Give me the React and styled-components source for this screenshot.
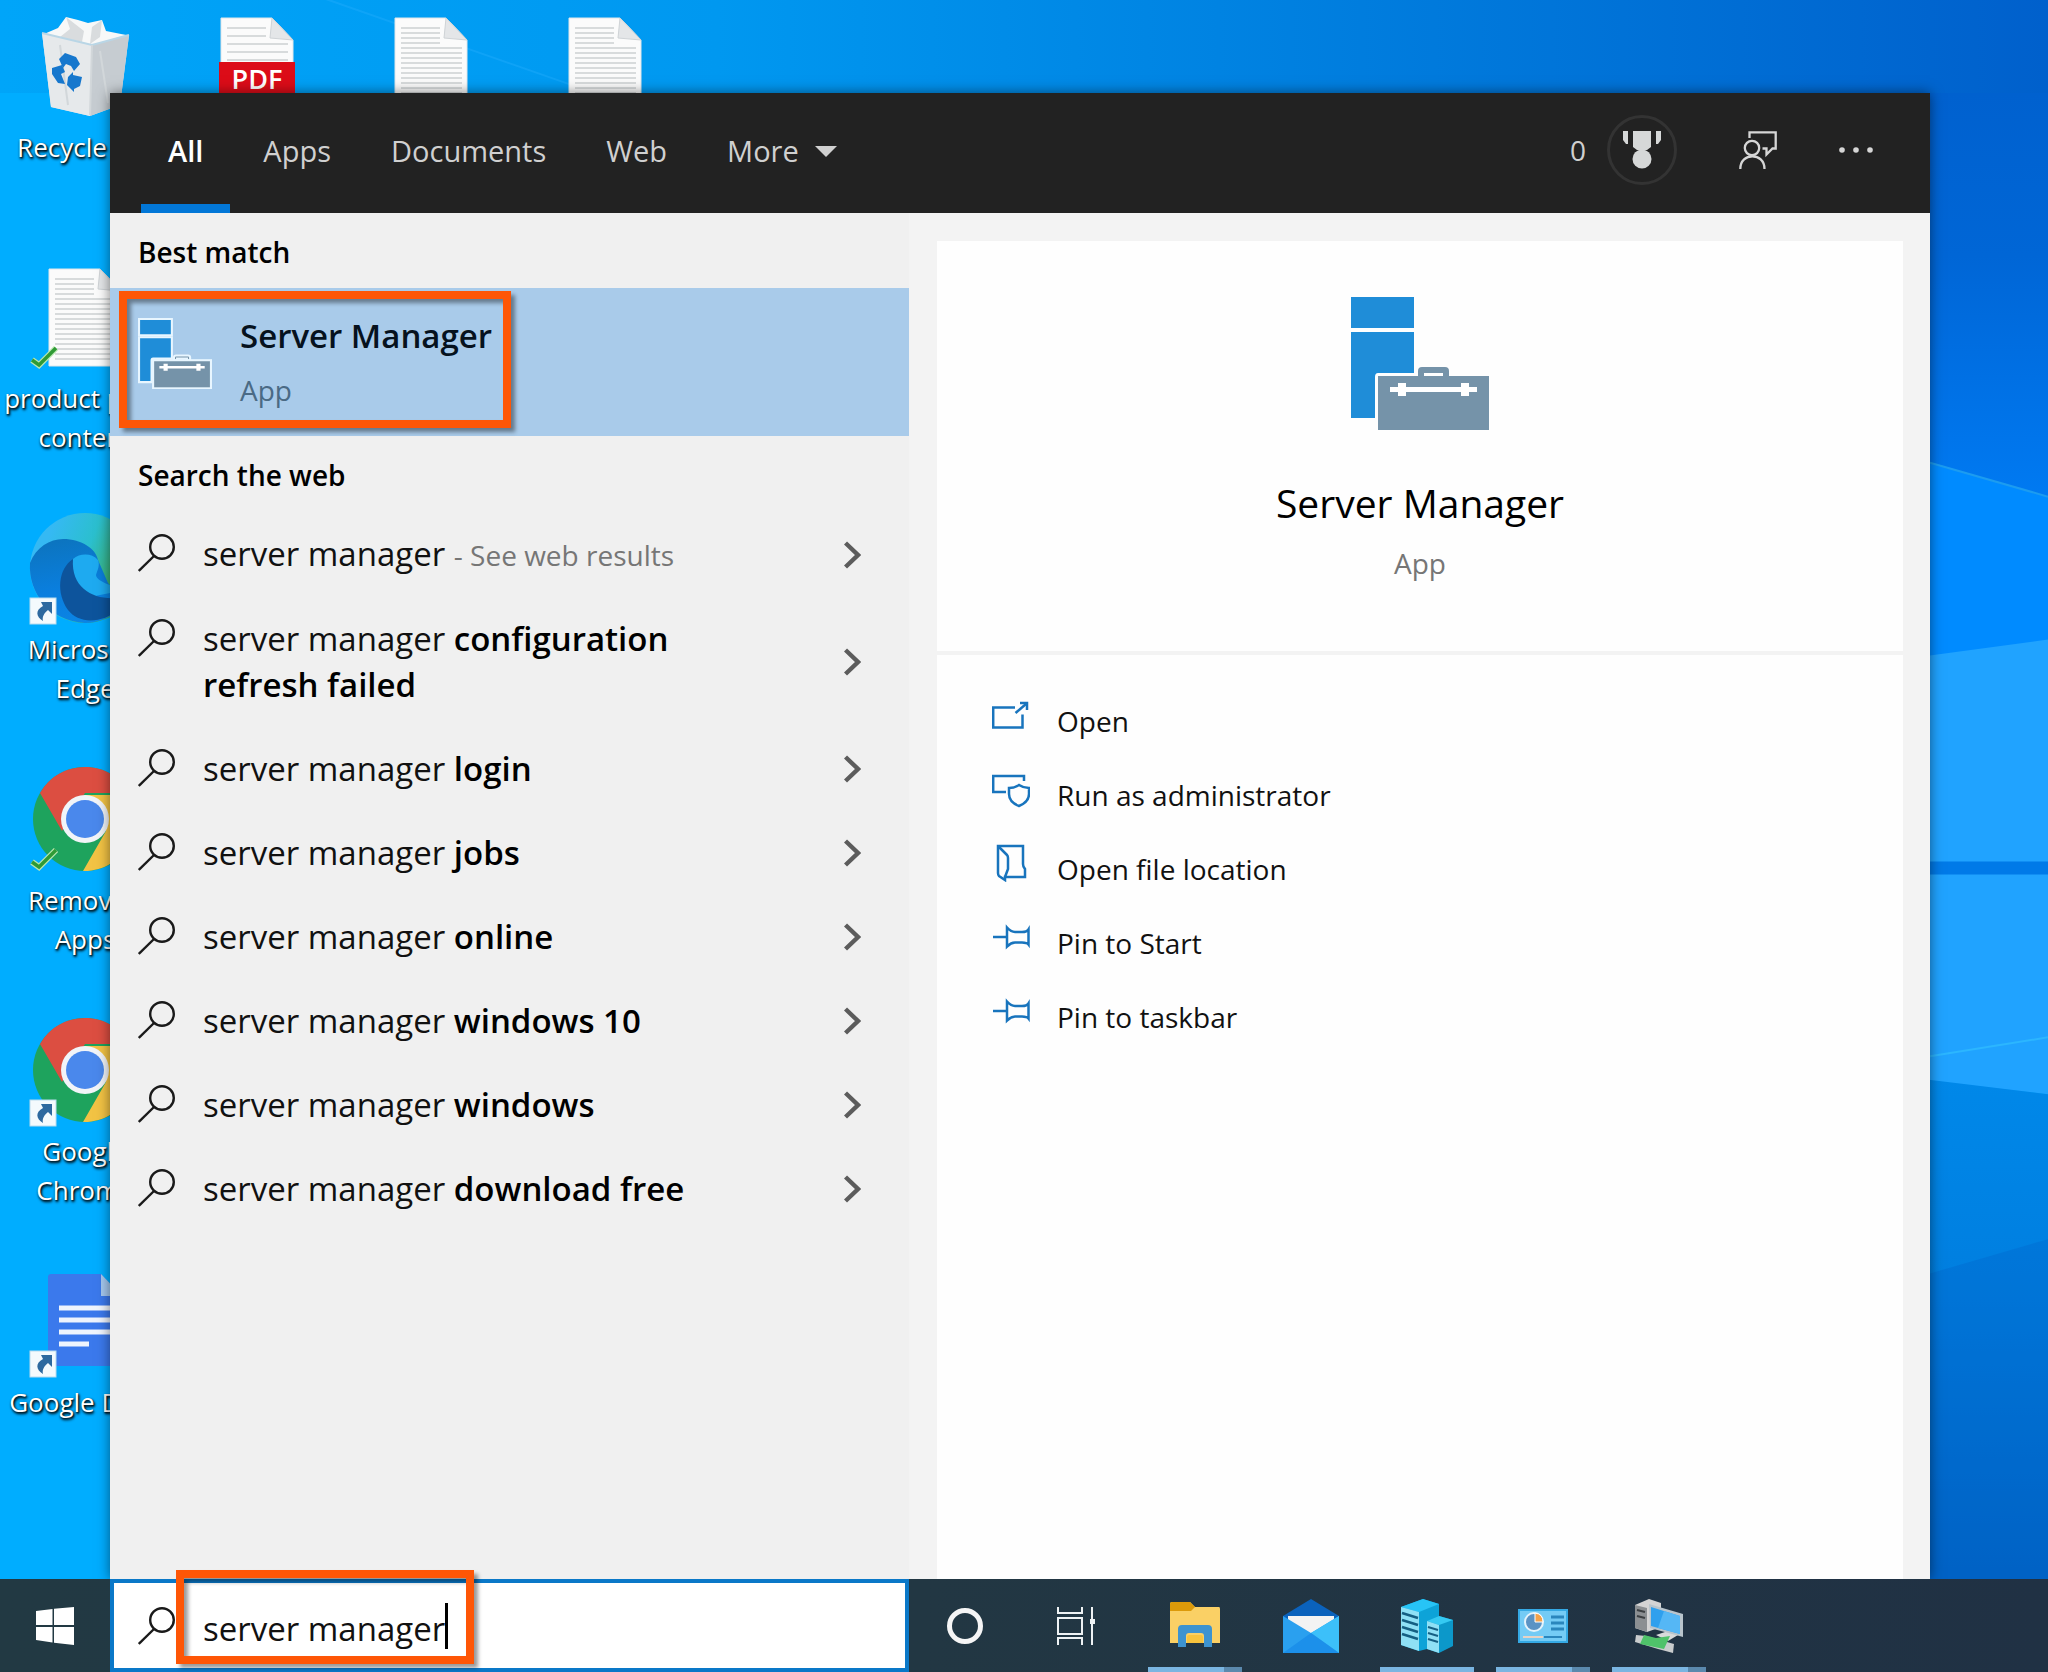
import React, { useState } from 'react';
import styled, { createGlobalStyle, css } from 'styled-components';

const GlobalStyle = createGlobalStyle`
  *, *::before, *::after { box-sizing: border-box; }
  body {
    margin: 0;
    font-family: 'Open Sans', 'Noto Sans', sans-serif;
    font-size: 28px;
    line-height: 38px;
    color: #111;
  }
  button, input { font: inherit; color: inherit; }
  svg { display: block; flex: none; }
`;

const buttonReset = css`
  border: 0;
  margin: 0;
  padding: 0;
  background: none;
  text-align: left;
  cursor: pointer;
`;

/* ---------- shell ---------- */

const Shell = styled.div`
  min-height: 100vh;
  display: flex;
  flex-direction: column;
`;

const Desktop = styled.main`
  position: relative;
  flex: 1;
  overflow: hidden;
  background: #00adff;
`;

const WallpaperArt = styled.svg`
  position: absolute;
  inset: 0;
  width: 100%;
  height: 100%;
`;

const IconGrid = styled.div`
  position: relative;
  display: grid;
  grid-auto-flow: column;
  grid-template-rows: repeat(6, 251px);
  grid-template-columns: 170px repeat(3, 174px);
  height: 0;
`;

const Shortcut = styled.button`
  ${buttonReset}
  grid-column: ${(p) => p.$column};
  display: flex;
  flex-direction: column;
  align-items: center;
  gap: 7px;
  padding-top: 11px;
`;

const ShortcutLabel = styled.span`
  width: 170px;
  font-size: 26px;
  line-height: 39px;
  text-align: center;
  color: #fff;
  text-shadow: 1px 2px 3px #000, 1px 1px 2px rgba(0, 0, 0, 0.8);
`;

/* ---------- search window ---------- */

const SearchWindow = styled.section`
  position: absolute;
  top: 93px;
  left: 110px;
  right: 118px;
  bottom: 0;
  display: flex;
  flex-direction: column;
  box-shadow: 0 0 12px rgba(0, 0, 0, 0.5);
`;

const Header = styled.header`
  flex: none;
  height: 120px;
  display: flex;
  align-items: center;
  padding: 0 57px 0 31px;
  background: #222;
  color: #d0d0d0;
`;

const Tabs = styled.nav`
  align-self: stretch;
  display: flex;
  gap: 6px;
`;

const Tab = styled.button`
  ${buttonReset}
  display: flex;
  align-items: center;
  gap: 16px;
  padding: 9px 27px 4px;
  border-bottom: 9px solid ${(p) => (p.$active ? '#0277d7' : 'transparent')};
  color: ${(p) => (p.$active ? '#fff' : '#d0d0d0')};
  font-size: 29px;
  font-weight: ${(p) => (p.$active ? 600 : 400)};
`;

const HeaderTools = styled.div`
  margin-left: auto;
  display: flex;
  align-items: center;
  gap: 62px;
  padding-bottom: 7px;
`;

const Rewards = styled.button`
  ${buttonReset}
  display: flex;
  align-items: center;
  gap: 21px;
`;

const RewardsRing = styled.span`
  display: grid;
  place-items: center;
  width: 70px;
  height: 70px;
  border: 3px solid #333;
  border-radius: 50%;
`;

const ToolButton = styled.button`
  ${buttonReset}
`;

const Panes = styled.div`
  flex: 1;
  display: flex;
  min-height: 0;
`;

const Results = styled.div`
  flex: none;
  width: 799px;
  background: #f0f0f0;
`;

const SectionTitle = styled.h2`
  margin: 0;
  height: 75px;
  padding: 20px 28px 0;
  font-size: 28px;
  line-height: 38px;
  font-weight: 600;
  color: #000;
`;

const BestMatch = styled.button`
  ${buttonReset}
  position: relative;
  width: 100%;
  height: 148px;
  display: flex;
  align-items: flex-start;
  gap: 28px;
  padding: 25px 28px;
  background: #a9cbea;
`;

const BestIcon = styled.span`
  margin-top: 5px;
`;

const BestText = styled.span`
  display: flex;
  flex-direction: column;
  gap: 12px;
`;

const BestName = styled.span`
  font-size: 33px;
  line-height: 46px;
  font-weight: 600;
  color: #06121e;
`;

const BestKind = styled.span`
  color: #4a6a85;
`;

const Highlight = styled.span`
  position: absolute;
  border: 8px solid #fe5606;
  box-shadow: 4px 4px 4px rgba(0, 0, 0, 0.4), inset 4px 4px 4px rgba(0, 0, 0, 0.4);
  pointer-events: none;
`;

const MatchHighlight = styled(Highlight)`
  left: 9px;
  top: 3px;
  width: 392px;
  height: 137px;
`;

const FieldHighlight = styled(Highlight)`
  left: 62px;
  top: -13px;
  width: 298px;
  height: 94px;
`;

const ResultList = styled.ul`
  margin: 0;
  padding: 0;
  list-style: none;
`;

const Result = styled.button`
  ${buttonReset}
  width: 100%;
  display: flex;
  align-items: center;
  gap: 28px;
  padding: 20px 48px 18px 28px;
`;

const ResultIcon = styled.span`
  align-self: flex-start;
  padding-top: 3px;
`;

const ResultText = styled.span`
  flex: 1;
  padding-right: 120px;
  font-size: 33px;
  line-height: 46px;
`;

const Completion = styled.strong`
  font-weight: 600;
  color: #000;
`;

const Hint = styled.span`
  font-size: 28px;
  color: #767676;
`;

const Details = styled.div`
  flex: 1;
  display: flex;
  padding: 28px 27px 0 28px;
  background: #f3f3f3;
`;

const Card = styled.article`
  flex: 1;
  background: #fefefe;
`;

const Preview = styled.div`
  display: flex;
  flex-direction: column;
  align-items: center;
  padding: 54px 0 69px;
  border-bottom: 4px solid #f3f3f3;
`;

const PreviewName = styled.h1`
  margin: 41px 0 11px;
  font-size: 39px;
  line-height: 60px;
  font-weight: 400;
  color: #000;
`;

const PreviewKind = styled.p`
  margin: 0;
  color: #767676;
`;

const ActionList = styled.ul`
  margin: 0;
  padding: 41px 55px;
  list-style: none;
`;

const Action = styled.button`
  ${buttonReset}
  width: 100%;
  height: 74px;
  display: flex;
  align-items: flex-start;
  gap: 27px;
`;

const ActionLabel = styled.span`
  line-height: 50px;
`;

/* ---------- taskbar ---------- */

const Taskbar = styled.footer`
  flex: none;
  position: relative;
  height: 93px;
  display: flex;
  background: linear-gradient(90deg, #223943, #223743 45%, #203144);
`;

const TaskButton = styled.button`
  ${buttonReset}
  display: grid;
  place-items: center;
  width: ${(p) => (p.$wide ? 111 : 94)}px;
`;

const StartButton = styled(TaskButton)`
  width: 110px;
`;

const RunningApps = styled.div`
  display: flex;
  gap: 22px;
  margin-left: 17px;
`;

const AppButton = styled(TaskButton)`
  padding-top: 5px;
  border-bottom: 5px solid transparent;
  ${(p) => p.$running && css`border-image: linear-gradient(90deg, #7ab5e1 ${p.$stacked ? 73 : 100}px, #5b89ad 0) 5;`}
`;

const SearchField = styled.label`
  position: relative;
  width: 799px;
  display: flex;
  align-items: center;
  gap: 28px;
  padding-left: 24px;
  border: 4px solid #0a78c8;
  background: #fff;
`;

const SearchInput = styled.input`
  field-sizing: content;
  padding: 6px 0 0;
  border: 0;
  outline: 0;
  background: none;
  font-size: 33px;
  line-height: 46px;
  caret-color: transparent;
`;

const Caret = styled.span`
  width: 3px;
  height: 46px;
  margin-left: -28px;
  background: #000;
`;

/* ---------- drawings ---------- */

function Wallpaper() {
  return (
    <WallpaperArt viewBox="0 0 2048 1580" preserveAspectRatio="none" aria-hidden="true">
      <defs>
        <linearGradient id="sky" x1="0" x2="1" y1="0" y2="0">
          <stop offset="0" stopColor="#00a5f9" />
          <stop offset="0.35" stopColor="#0098f0" />
          <stop offset="0.7" stopColor="#007adc" />
          <stop offset="1" stopColor="#0060cc" />
        </linearGradient>
        <linearGradient id="rightSky" x1="0" x2="0" y1="0" y2="1">
          <stop offset="0" stopColor="#0061cf" />
          <stop offset="0.4" stopColor="#0066d6" />
          <stop offset="1" stopColor="#007af2" />
        </linearGradient>
        <linearGradient id="ground" x1="0" x2="0" y1="0" y2="1">
          <stop offset="0" stopColor="#0088e9" />
          <stop offset="0.4" stopColor="#007fe0" />
          <stop offset="1" stopColor="#0063c4" />
        </linearGradient>
      </defs>
      <rect width="2048" height="120" fill="url(#sky)" />
      <rect y="93" width="130" height="1487" fill="#00adff" />
      <path d="M300 -10L700 130" stroke="#2ab0ff" strokeWidth="2" opacity="0.35" />
      <path d="M1900 93H2048V500H1900Z" fill="url(#rightSky)" />
      <path d="M1900 455L2048 497V660H1900Z" fill="#008bff" />
      <path d="M1930 463L2048 497" stroke="#1c9cf0" strokeWidth="2" />
      <path d="M1900 660L2048 640V1095L1900 1078Z" fill="#20a3ff" />
      <path d="M1900 862H2048V875H1900Z" fill="#007ae8" />
      <path d="M1930 1057L2048 1038" stroke="#2cb6ff" strokeWidth="2" />
      <path d="M1900 1077L2048 1095V1580H1900Z" fill="url(#ground)" />
      <path d="M1900 1283L2048 1240V1580H1900Z" fill="#0060c8" opacity="0.3" />
    </WallpaperArt>
  );
}

const LinkBadge = () => (
  <g>
    <rect x="0" y="85" width="26" height="26" fill="#f4fafd" stroke="#b9dcee" />
    <path d="M11 89H22V101L18 97C14 100 12 104 13 108C6 104 5 97 13 93Z" fill="#2d699f" />
  </g>
);

const Sync = () => (
  <g fill="none">
    <path d="M2 98L9 103L26 86" stroke="#b8e8b0" strokeWidth="6" />
    <path d="M2 98L9 103L26 86" stroke="#2f9a35" strokeWidth="3.5" />
  </g>
);

function DesktopArt({ children }) {
  return (
    <svg width="110" height="110" viewBox="0 0 110 110" overflow="visible" aria-hidden="true">
      {children}
    </svg>
  );
}

function BinArt() {
  return (
    <DesktopArt>
      <path d="M12 22L99 24L90 94L60 105L21 96Z" fill="#dfe3e6" />
      <path d="M12 22L62 34L60 105L21 96Z" fill="#e6e9eb" />
      <path d="M62 34L99 24L90 94L60 105Z" fill="#c6ccd1" />
      <path d="M14 23L28 17L36 6L48 9L58 12L72 9L76 20L96 24L62 34Z" fill="#f7f8f8" />
      <path d="M36 6L40 18L30 26L52 31L54 20ZM62 16L72 9L70 26L60 33Z" fill="#d9dcde" />
      <path d="M12 22L62 34L99 24" fill="none" stroke="#b9d6e6" strokeWidth="2" />
      <path d="M62 34L60 104M70 40L78 92M30 34L38 94" stroke="#d2d7da" strokeWidth="2" />
      <g fill="#1677cd">
        <path d="M29 48L35 42L46 46L50 53L44 60L41 55L36 53L33 57Z" />
        <path d="M22 57L32 54L35 61L31 63L35 73L28 72L22 63Z" />
        <path d="M38 66L43 61V64L52 66L50 75L44 78V81L37 74Z" />
      </g>
    </DesktopArt>
  );
}

function Page({ sparse }) {
  const lines = [];
  for (let y = 17; y < 98; y += sparse ? 8 : 5) lines.push(y);
  return (
    <g>
      <path d="M19 7H70L91 29V104H19Z" fill="#fbfbfb" stroke="#dfe6ea" />
      {lines.map((y) => (
        <path key={y} d={`M25 ${y}H${y < 33 ? 64 : 86}`} stroke="#cdd0d2" strokeWidth="1.5" />
      ))}
      <path d="M70 7L68 27L91 29Z" fill="#e4e6e8" stroke="#cfd3d6" />
    </g>
  );
}

const PageArt = () => (
  <DesktopArt>
    <Page />
  </DesktopArt>
);

const SyncedPageArt = () => (
  <DesktopArt>
    <Page />
    <Sync />
  </DesktopArt>
);

const PdfArt = () => (
  <DesktopArt>
    <Page sparse />
    <rect x="17" y="51" width="76" height="46" fill="#dc0c18" />
    <text x="55" y="78" textAnchor="middle" fontSize="27" fontWeight="600" fill="#fff">
      PDF
    </text>
  </DesktopArt>
);

function EdgeArt() {
  return (
    <DesktopArt>
      <defs>
        <linearGradient id="edgeTop" x1="0" x2="1" y1="0.2" y2="0.6">
          <stop offset="0.15" stopColor="#35b9f3" />
          <stop offset="0.5" stopColor="#2bbfce" />
          <stop offset="0.85" stopColor="#3fae5b" />
        </linearGradient>
        <linearGradient id="edgeMid" x1="0.3" x2="0.5" y1="0" y2="1">
          <stop offset="0" stopColor="#0c74bf" />
          <stop offset="0.6" stopColor="#0a7fdf" />
          <stop offset="1" stopColor="#0b84e4" />
        </linearGradient>
      </defs>
      <circle cx="55" cy="55" r="55" fill="url(#edgeTop)" />
      <path d="M0 50C6 34 20 26 33 26C52 26 66 36 68 47L78 70L96 90C82 104 70 110 55 110C20 108 -2 80 0 50Z" fill="url(#edgeMid)" />
      <path d="M43 46C36 60 42 78 60 84L80 80V72C74 70 66 66 66 62C68 56 70 52 68 47C62 40 50 40 43 46Z" fill="#1eaaf0" />
      <path d="M43 46C28 56 26 80 38 97C48 110 70 112 90 96L104 80C80 92 40 84 43 46Z" fill="#0d549c" />
      <LinkBadge />
    </DesktopArt>
  );
}

function ChromeArt({ badge }) {
  return (
    <DesktopArt>
      <circle cx="55" cy="55" r="52" fill="#1ea35d" />
      <path d="M10 29C20 12 36 3 55 3C74 3 91 13 100 29H55L32 67Z" fill="#dc4e41" />
      <path d="M55 31H101C115 62 95 108 53 107L76 67Z" fill="#f2c344" />
      <circle cx="55" cy="55" r="24" fill="#f1f4f8" />
      <circle cx="55" cy="55" r="19" fill="#4a88ec" />
      {badge}
    </DesktopArt>
  );
}

const DocsArt = () => (
  <DesktopArt>
    <path d="M18 11Q18 8 21 8H71L92 30V97Q92 100 89 100H21Q18 100 18 97Z" fill="#3b79ec" />
    <path d="M71 8L92 30H71Z" fill="#a5c8ee" />
    <path d="M29 42H82M29 54H82M29 66H82M29 78H59" stroke="#eef4fd" strokeWidth="5" />
    <LinkBadge />
  </DesktopArt>
);

const Magnifier = () => (
  <svg width="37" height="38" viewBox="0 0 37 38" fill="none" stroke="#1a1a1a" strokeWidth="2.4" aria-hidden="true">
    <circle cx="24" cy="13" r="11.8" />
    <path d="M0.8 37L16 22" />
  </svg>
);

const Chevron = () => (
  <svg width="17" height="28" viewBox="0 0 17 28" fill="none" stroke="#5c5c5c" strokeWidth="4.4" aria-hidden="true">
    <path d="M1.5 2L14 14L1.5 26" />
  </svg>
);

const ServerArt = ({ width, outlined }) => (
  <svg
    width={width}
    viewBox="-2 -2 142 137"
    stroke={outlined ? '#e8f6ff' : 'none'}
    strokeWidth={outlined ? 4 : 0}
    aria-hidden="true"
  >
    <path d="M0 0H63V31H0Z" fill="#1f8dd8" />
    <path d="M0 35H63V76H27Q24 76 24 80V121H0Z" fill="#1f8dd8" />
    <path d="M67 79V74Q67 70 71 70H94Q98 70 98 74V79H92V76H73V79Z" fill="#7593a9" />
    <rect x="27" y="79" width="111" height="54" fill="#7593a9" />
    <path d="M39 92.500H126" stroke="#fff" strokeWidth="5" />
    <path d="M47 86H55V99H47ZM110 86H118V99H110Z" fill="#fff" stroke="none" />
  </svg>
);

const Medal = () => (
  <svg width="38" height="38" viewBox="0 0 38 38" fill="#d6d8d8" aria-hidden="true">
    <path d="M10 0H28V16L24 19H14L10 16ZM0 0H5V13H3L0 9ZM33 0H38V9L35 13H33Z" />
    <circle cx="19" cy="28" r="9.500" />
  </svg>
);

const Feedback = () => (
  <svg width="38" height="38" viewBox="0 0 38 38" fill="none" stroke="#d6d6d6" strokeWidth="2.300" aria-hidden="true">
    <circle cx="13" cy="17" r="7.200" />
    <path d="M1.300 38C1.300 21 25.500 21 25.500 38" />
    <path d="M10.500 7V1.300H36.700V17.500H33.500L27.500 23.500V17.500H23.500" />
  </svg>
);

const Dots = () => (
  <svg width="34" height="38" viewBox="0 0 34 38" fill="#d6d6d6" aria-hidden="true">
    <circle cx="3" cy="19" r="2.800" />
    <circle cx="17" cy="19" r="2.800" />
    <circle cx="31" cy="19" r="2.800" />
  </svg>
);

const DownTriangle = () => (
  <svg width="22" height="11" viewBox="0 0 22 11" fill="#d0d0d0" aria-hidden="true">
    <path d="M0 0H22L11 11Z" />
  </svg>
);

const ActionArt = ({ children }) => (
  <svg width="38" height="38" viewBox="0 0 38 38" fill="none" stroke="#1874bd" strokeWidth="2.500" aria-hidden="true">
    {children}
  </svg>
);

const OpenArt = () => (
  <ActionArt>
    <path d="M23 11.500H1.200V31.500H30.500V18.500" />
    <path d="M23.500 17L34 8" />
    <path d="M28 7H35V14" />
  </ActionArt>
);

const AdminArt = () => (
  <ActionArt>
    <path d="M32 11V6H1.200V22H14" />
    <path d="M27 15C30 17 33 18 37 18V24C37 31 32 34 27 36C22 34 17 31 17 24V18C21 18 24 17 27 15Z" />
  </ActionArt>
);

const FolderArt = () => (
  <ActionArt>
    <path d="M6 2H31V20Q31 23 33 25V33H13V36L7 32Q6 31 6 29Z" />
    <path d="M7 3L15 11Q16 12 16 14V25L13 33" />
  </ActionArt>
);

const PinArt = () => (
  <ActionArt>
    <path d="M1 19H15" />
    <path d="M15 9.500Q19 14 23 14H30Q35 14 36.500 11.500V26.500Q35 24.500 30 24.500H23Q19 24.500 15 28.500Z" />
  </ActionArt>
);

const WindowsLogo = () => (
  <svg width="38" height="38" viewBox="0 0 38 38" fill="#fff" aria-hidden="true">
    <path d="M0 4L16.500 2V18H0ZM18 1.800L38 0V18H18ZM0 20H16.500V35.500L0 33ZM18 20H38V38L18 35.700Z" />
  </svg>
);

const CortanaArt = () => (
  <svg width="38" height="38" viewBox="0 0 38 38" aria-hidden="true">
    <circle cx="19" cy="19" r="15.500" fill="none" stroke="#f5f5f5" strokeWidth="5" />
  </svg>
);

const TaskViewArt = () => (
  <svg width="38" height="38" viewBox="0 0 38 38" fill="none" stroke="#eef2f4" strokeWidth="2" aria-hidden="true">
    <path d="M1 0V6H25V0M1 38V31H25V38" />
    <rect x="1" y="11" width="24" height="16" />
    <path d="M35 0V38" />
    <rect x="33" y="12" width="5" height="5" fill="#eef2f4" stroke="none" />
  </svg>
);

const ExplorerArt = () => (
  <svg width="52" height="54" viewBox="0 0 52 54" aria-hidden="true">
    <path d="M1 5Q1 3 3 3H21L26 8H50Q51 8 51 10V44H1Z" fill="#fad065" />
    <path d="M1 5Q1 3 3 3H21L26 8L22 12H1Z" fill="#dc9a0a" />
    <path d="M9 48V30Q9 26 13 26H39Q43 26 43 30V48H35V37Q35 34 32 34H20Q17 34 17 37V48Z" fill="#3d93cf" />
    <path d="M18 44V38Q18 36 20 36H32Q34 36 34 38V44Z" fill="#f7c33d" />
  </svg>
);

const MailArt = () => (
  <svg width="56" height="54" viewBox="0 0 56 54" aria-hidden="true">
    <path d="M0 17L28 0L56 17V30H0Z" fill="#0b62bc" />
    <path d="M5 17H51V30L28 40L5 30Z" fill="#f3f3f3" />
    <path d="M0 17L28 34L56 17V54H0Z" fill="#2aa0ef" />
    <path d="M28 34L56 17V54Z" fill="#3cc0fa" />
    <path d="M0 54L28 34L56 54Z" fill="#1c90ea" />
  </svg>
);

const ServersArt = () => (
  <svg width="52" height="54" viewBox="0 0 52 54" aria-hidden="true">
    <path d="M0 8L22 0L38 5V47L18 52L0 46Z" fill="#0da3d8" />
    <path d="M0 8L22 0L38 5L18 13Z" fill="#27c4f6" />
    <path d="M0 8L18 13V52L0 46Z" fill="#8fe0f5" />
    <path d="M1 14L17 19M1 21L17 26M1 28L17 33M1 35L17 40" stroke="#155f83" strokeWidth="2.500" />
    <path d="M26 22L38 17L52 21V47L38 54L26 50Z" fill="#0c98ca" />
    <path d="M26 22L38 17L52 21L38 26Z" fill="#35c9f2" />
    <path d="M26 22L38 26V54L26 50Z" fill="#8fe0f5" />
    <path d="M27 28L37 31M27 34L37 37M27 40L37 43" stroke="#155f83" strokeWidth="2" />
  </svg>
);

const ControlPanelArt = () => (
  <svg width="50" height="34" viewBox="0 0 50 34" aria-hidden="true">
    <rect x="1" y="1" width="48" height="32" fill="#74cbf5" stroke="#35a9e4" strokeWidth="2" />
    <circle cx="16" cy="13" r="9" fill="#5b93c4" stroke="#e4f3fb" strokeWidth="2" />
    <path d="M17 4Q25 5 25 13H17Z" fill="#f3a24a" stroke="#fff" />
    <path d="M33 8H46M33 14H46M33 20H46" stroke="#2a86bd" strokeWidth="3" />
    <path d="M5 28H25" stroke="#e6d3c5" strokeWidth="2" />
    <path d="M26 28H44" stroke="#2a86bd" strokeWidth="2" />
  </svg>
);

const RemoteArt = () => (
  <svg width="50" height="54" viewBox="0 0 50 54" aria-hidden="true">
    <path d="M1 6L15 0L27 4V28L13 33L1 29Z" fill="#d4d4d4" />
    <path d="M1 6L13 9V33L1 29Z" fill="#8b8f92" />
    <path d="M3 11L11 13M3 17L11 19" stroke="#3b3f42" strokeWidth="2" />
    <path d="M22 36L34 32L44 36L34 42Z" fill="#d8dadb" />
    <path d="M15 5L49 15V38L16 29Z" fill="#b8c4cc" />
    <path d="M17 8L46 17V35L17 27Z" fill="#2fa0ee" />
    <path d="M30 12L46 17V35L24 29Z" fill="#55b7f5" />
    <path d="M2 36L12 37L40 45L39 54L24 50L1 43Z" fill="#c9cccd" />
    <path d="M10 36L22 39L36 37L30 50L6 45Z" fill="#4fc26a" />
  </svg>
);

/* ---------- content ---------- */

const shortcuts = [
  { label: 'Recycle Bin', art: <BinArt />, column: 1 },
  { label: 'product page content', art: <SyncedPageArt />, column: 1 },
  { label: 'Microsoft Edge', art: <EdgeArt />, column: 1 },
  { label: 'Removed Apps', art: <ChromeArt badge={<Sync />} />, column: 1 },
  { label: 'Google Chrome', art: <ChromeArt badge={<LinkBadge />} />, column: 1 },
  { label: 'Google Docs', art: <DocsArt />, column: 1 },
  { name: 'PDF file', art: <PdfArt />, column: 2 },
  { name: 'Text file', art: <PageArt />, column: 3 },
  { name: 'Text file', art: <PageArt />, column: 4 },
];

const completions = [
  null,
  'configuration refresh failed',
  'login',
  'jobs',
  'online',
  'windows 10',
  'windows',
  'download free',
];

const actions = [
  ['Open', <OpenArt />],
  ['Run as administrator', <AdminArt />],
  ['Open file location', <FolderArt />],
  ['Pin to Start', <PinArt />],
  ['Pin to taskbar', <PinArt />],
];

const apps = [
  { name: 'File Explorer', art: <ExplorerArt />, running: true, stacked: true },
  { name: 'Mail', art: <MailArt /> },
  { name: 'Server Manager', art: <ServersArt />, running: true },
  { name: 'Control Panel', art: <ControlPanelArt />, running: true, stacked: true },
  { name: 'Remote Desktop', art: <RemoteArt />, running: true, stacked: true },
];

export default function App() {
  const [query, setQuery] = useState('server manager');

  return (
    <Shell>
      <GlobalStyle />
      <Desktop>
        <Wallpaper />
        <IconGrid>
          {shortcuts.map((s, i) => (
            <Shortcut key={i} $column={s.column} aria-label={s.name}>
              {s.art}
              {s.label && <ShortcutLabel>{s.label}</ShortcutLabel>}
            </Shortcut>
          ))}
        </IconGrid>

        <SearchWindow>
          <Header>
            <Tabs>
              <Tab $active>All</Tab>
              <Tab>Apps</Tab>
              <Tab>Documents</Tab>
              <Tab>Web</Tab>
              <Tab>
                More
                <DownTriangle />
              </Tab>
            </Tabs>
            <HeaderTools>
              <Rewards>
                0
                <RewardsRing>
                  <Medal />
                </RewardsRing>
              </Rewards>
              <ToolButton aria-label="Feedback">
                <Feedback />
              </ToolButton>
              <ToolButton aria-label="Options">
                <Dots />
              </ToolButton>
            </HeaderTools>
          </Header>

          <Panes>
            <Results>
              <SectionTitle>Best match</SectionTitle>
              <BestMatch>
                <BestIcon>
                  <ServerArt width={74} outlined />
                </BestIcon>
                <BestText>
                  <BestName>Server Manager</BestName>
                  <BestKind>App</BestKind>
                </BestText>
                <MatchHighlight />
              </BestMatch>
              <SectionTitle>Search the web</SectionTitle>
              <ResultList>
                {completions.map((completion, i) => (
                  <li key={i}>
                    <Result>
                      <ResultIcon>
                        <Magnifier />
                      </ResultIcon>
                      <ResultText>
                        server manager{' '}
                        {completion ? <Completion>{completion}</Completion> : <Hint>- See web results</Hint>}
                      </ResultText>
                      <Chevron />
                    </Result>
                  </li>
                ))}
              </ResultList>
            </Results>

            <Details>
              <Card>
                <Preview>
                  <ServerArt width={142} />
                  <PreviewName>Server Manager</PreviewName>
                  <PreviewKind>App</PreviewKind>
                </Preview>
                <ActionList>
                  {actions.map(([label, art]) => (
                    <li key={label}>
                      <Action>
                        {art}
                        <ActionLabel>{label}</ActionLabel>
                      </Action>
                    </li>
                  ))}
                </ActionList>
              </Card>
            </Details>
          </Panes>
        </SearchWindow>
      </Desktop>

      <Taskbar>
        <StartButton aria-label="Start">
          <WindowsLogo />
        </StartButton>
        <SearchField>
          <Magnifier />
          <SearchInput
            type="text"
            aria-label="Search"
            value={query}
            onChange={(e) => setQuery(e.target.value)}
          />
          <Caret />
          <FieldHighlight />
        </SearchField>
        <TaskButton $wide aria-label="Cortana">
          <CortanaArt />
        </TaskButton>
        <TaskButton $wide aria-label="Task view">
          <TaskViewArt />
        </TaskButton>
        <RunningApps>
          {apps.map((app) => (
            <AppButton key={app.name} $running={app.running} $stacked={app.stacked} aria-label={app.name}>
              {app.art}
            </AppButton>
          ))}
        </RunningApps>
      </Taskbar>
    </Shell>
  );
}
